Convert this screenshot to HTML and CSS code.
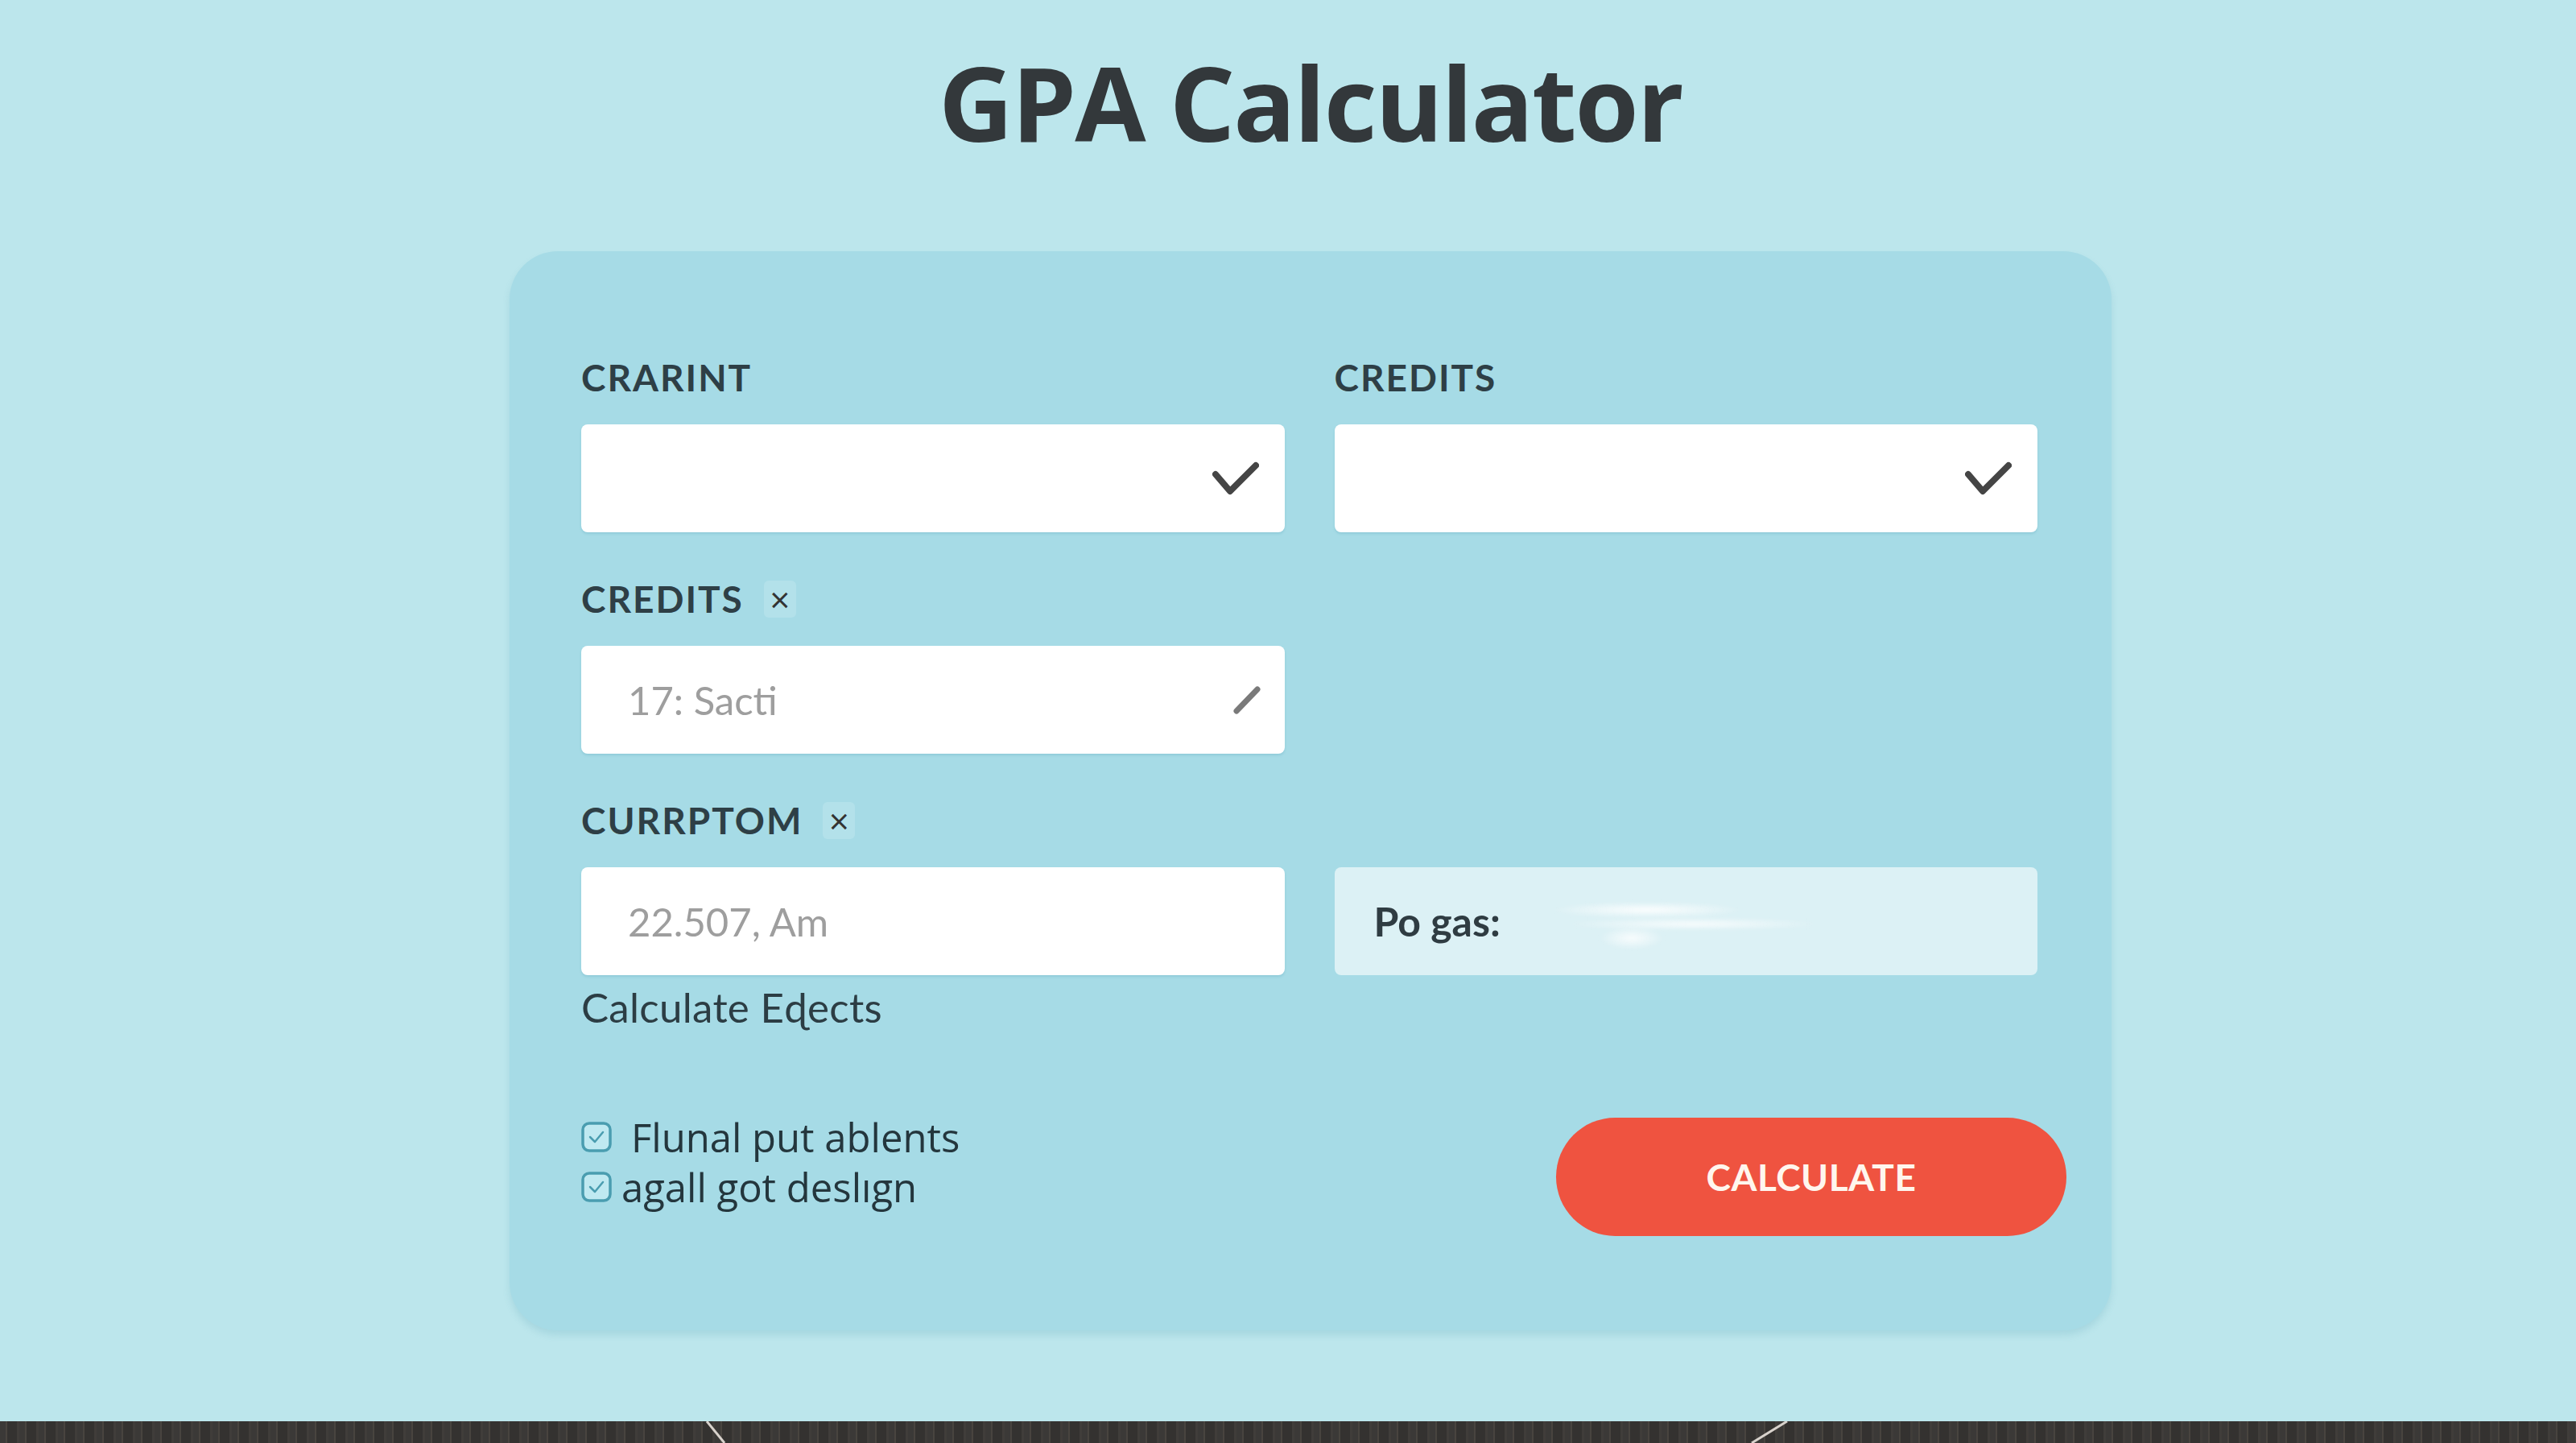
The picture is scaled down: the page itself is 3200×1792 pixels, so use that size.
FILE: index.html
```html
<!DOCTYPE html>
<html lang="en">
<head>
    <meta charset="UTF-8">
    <meta name="viewport" content="width=device-width, initial-scale=1.0">
    <title>GPA Calculator</title>
    <link rel="stylesheet" href="styles.css">
</head>
<body>
    <h1 class="title">GPA Calculator</h1>

    <div class="card">
        <div class="form-grid">
            <div class="field-label">CRARINT</div>
            <div class="field-label">CREDITS</div>
            <div class="input-box">
                <span class="input-text"></span>
                <svg class="icon-check" width="58" height="42" viewBox="0 0 58 42">
                    <path d="M4 16 L22 37 L54 5" fill="none" stroke="#454545" stroke-width="8" stroke-linecap="round" stroke-linejoin="round"/>
                </svg>
            </div>
            <div class="input-box">
                <span class="input-text"></span>
                <svg class="icon-check" width="58" height="42" viewBox="0 0 58 42">
                    <path d="M4 16 L22 37 L54 5" fill="none" stroke="#454545" stroke-width="8" stroke-linecap="round" stroke-linejoin="round"/>
                </svg>
            </div>

            <div class="field-label spaced col-left">CREDITS <span class="badge">&times;</span></div>
            <div class="input-box col-left">
                <span class="input-text">17: Sacti</span>
                <svg class="icon-pencil" width="34" height="35" viewBox="0 0 34 35">
                    <path d="M4 31 L30 4" fill="none" stroke="#7a7a7a" stroke-width="7" stroke-linecap="round"/>
                </svg>
            </div>

            <div class="field-label spaced col-left">CURRPTOM <span class="badge">&times;</span></div>
            <div class="input-box col-left">
                <span class="input-text">22.507, Am</span>
            </div>
            <div class="result-box">
                <span class="result-label">Po gas:</span>
                <span class="result-value"></span>
            </div>
            <div class="hint col-left">Calculate Eɖects</div>
        </div>

        <div class="card-footer">
            <div class="checklist">
                <label class="check-item">
                    <svg width="38" height="38" viewBox="0 0 38 38">
                        <rect x="2" y="2" width="34" height="34" rx="8" fill="#bfe9f1" stroke="#4a9db0" stroke-width="3.5"/>
                        <path d="M11 19 L17 25 L27 13" fill="none" stroke="#4a9db0" stroke-width="2.5" stroke-linecap="round" stroke-linejoin="round"/>
                    </svg>
                    <span>Flunal put ablents</span>
                </label>
                <label class="check-item tight">
                    <svg width="38" height="38" viewBox="0 0 38 38">
                        <rect x="2" y="2" width="34" height="34" rx="8" fill="#bfe9f1" stroke="#4a9db0" stroke-width="3.5"/>
                        <path d="M11 19 L17 25 L27 13" fill="none" stroke="#4a9db0" stroke-width="2.5" stroke-linecap="round" stroke-linejoin="round"/>
                    </svg>
                    <span>agall got deslıgn</span>
                </label>
            </div>
            <button class="calc-btn">CALCULATE</button>
        </div>
    </div>

    <div class="desk">
        <svg class="desk-lines" width="3200" height="27" viewBox="0 0 3200 27">
            <path d="M878 0 L900 27" stroke="#d8d2cc" stroke-width="3" fill="none"/>
            <path d="M2220 0 L2176 27" stroke="#d8d2cc" stroke-width="3" fill="none"/>
        </svg>
    </div>
</body>
</html>
```

FILE: styles.css
```css
*{
    box-sizing: border-box;
}
body{
    margin: 0;
    padding: 48px 0 0 56px;
    min-height: 100vh;
    display: flex;
    flex-direction: column;
    background-color: #bce6ec;
    font-family: Lato, "Open Sans", sans-serif;
    color: #2f4148;
}
.title{
    margin: 0;
    font-family: "Open Sans", sans-serif;
    font-weight: 700;
    font-size: 128px;
    line-height: 158px;
    letter-spacing: -2px;
    text-align: center;
    color: #33383b;
}
.card{
    width: 1990px;
    margin: 106px auto 0;
    padding: 134px 92px 117px 89px;
    border-radius: 60px;
    background-color: #a6dbe6;
    box-shadow: 0 6px 8px rgba(70, 150, 170, 0.18);
}
.form-grid{
    display: grid;
    grid-template-columns: 1fr 1fr;
    column-gap: 62px;
}
.col-left{
    grid-column: 1;
}
.field-label{
    display: flex;
    align-items: center;
    gap: 25px;
    height: 46px;
    margin-bottom: 35px;
    font-weight: 700;
    font-size: 46px;
    line-height: 46px;
    letter-spacing: 2px;
    color: #2e3f46;
}
.field-label.spaced{
    margin-top: 60px;
}
.badge{
    display: flex;
    align-items: center;
    justify-content: center;
    width: 40px;
    height: 46px;
    border-radius: 6px;
    background-color: #b3e1ea;
    font-family: "Open Sans", sans-serif;
    font-weight: 400;
    font-size: 44px;
    line-height: 46px;
    letter-spacing: 0;
    color: #333;
}
.input-box{
    display: flex;
    align-items: center;
    justify-content: space-between;
    height: 134px;
    padding: 0 32px 0 58px;
    border-radius: 8px;
    background-color: #fff;
    box-shadow: 0 2px 3px rgba(80, 160, 180, 0.25);
}
.input-text{
    font-size: 49px;
    color: #9e9e9e;
}
.icon-pencil{
    margin-right: -2px;
}
.result-box{
    display: flex;
    align-items: center;
    gap: 30px;
    height: 134px;
    padding-left: 49px;
    border-radius: 8px;
    background-color: #dcf1f5;
}
.result-label{
    font-weight: 700;
    font-size: 50px;
    color: #2f3c42;
}
.result-value{
    width: 380px;
    height: 70px;
    background:
        radial-gradient(ellipse 120px 10px at 40% 30%, rgba(255,255,255,0.9), transparent),
        radial-gradient(ellipse 160px 8px at 55% 55%, rgba(255,255,255,0.8), transparent),
        radial-gradient(ellipse 40px 14px at 35% 80%, rgba(255,255,255,0.8), transparent);
    filter: blur(2px);
}
.hint{
    margin-top: 14px;
    font-size: 51px;
    line-height: 52px;
    letter-spacing: 0.3px;
    color: #2c3d44;
}
.card-footer{
    display: flex;
    justify-content: space-between;
    align-items: flex-start;
    margin: 104px -36px 0 0;
}
.checklist{
    display: flex;
    flex-direction: column;
}
.check-item{
    display: flex;
    align-items: center;
    gap: 24px;
    height: 62px;
    font-family: "Open Sans", sans-serif;
    font-size: 49px;
    color: #24363d;
}
.check-item.tight{
    gap: 12px;
}
.calc-btn{
    width: 634px;
    height: 147px;
    margin-top: 7px;
    border: none;
    border-radius: 74px;
    background-color: #ef5340;
    font-family: Lato, sans-serif;
    font-weight: 700;
    font-size: 46px;
    letter-spacing: 0.5px;
    color: #fff6ee;
    cursor: pointer;
}
.desk{
    position: relative;
    height: 27px;
    margin: auto 0 0 -56px;
    background: repeating-linear-gradient(90deg, #3b3937 0 7px, #48443f 7px 9px, #343230 9px 21px, #403d3a 21px 24px);
}
.desk-lines{
    position: absolute;
    left: 0;
    top: 0;
}
```
